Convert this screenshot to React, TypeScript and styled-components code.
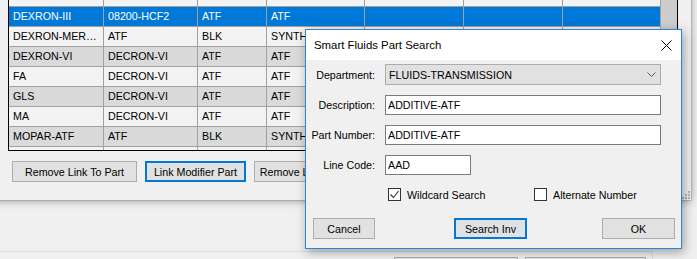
import React from "react";
import styled, { createGlobalStyle } from "styled-components";

const GlobalStyle = createGlobalStyle`
  html, body {
    margin: 0;
    padding: 0;
    background: #f0f0f0;
  }
  body {
    font-family: "Liberation Sans", Arial, sans-serif;
    font-size: 10.7px;
    color: #000000;
    overflow: hidden;
  }
  * {
    box-sizing: border-box;
  }
`;

const Desktop = styled.div`
  position: relative;
  width: 697px;
  height: 259px;
  overflow: hidden;
  background: #f0f0f0;
`;

/* main form that sits under the floating windows */
const MainForm = styled.div`
  padding-top: 251px;
  display: flex;
`;

const GroupBox = styled.div`
  margin-left: -10px;
  width: 663px;
  height: 30px;
  border-top: 1px solid #dcdcdc;
  border-right: 1px solid #dcdcdc;
  display: flex;
  justify-content: flex-end;
  gap: 7px;
  padding: 5px 6px 0 0;
`;

const Button = styled.button<{ $width: number; $focused?: boolean; $offset?: string }>`
  width: ${(p) => p.$width}px;
  height: 21px;
  flex: none;
  padding: 0;
  margin-left: ${(p) => p.$offset || "0"};
  font: inherit;
  color: #000000;
  background: #e1e1e1;
  border: ${(p) => (p.$focused ? "2px solid #0078d7" : "1px solid #adadad")};
  white-space: nowrap;
  overflow: hidden;
`;

/* window with the fluids grid */
const BackWindow = styled.div`
  position: absolute;
  left: -12px;
  top: -60px;
  width: 703px;
  height: 260px;
  background: #f0f0f0;
  box-shadow: 0 0 0 1px rgba(0, 0, 0, 0.12), 0 1px 8px rgba(0, 0, 0, 0.35);
  padding: 46px 0 0 20px;
  display: flex;
  flex-direction: column;
`;

const Grid = styled.div`
  width: 670px;
  height: 165px;
  border: 1px solid #000000;
  display: flex;
  overflow: hidden;
  background: #f0f0f0;
`;

const Rows = styled.div`
  width: 652px;
  flex: none;
  display: flex;
  flex-direction: column;
`;

type Shade = "light" | "dark" | "selected";

const rowBg: Record<Shade, string> = {
  light: "#f3f3f3",
  dark: "#dadada",
  selected: "#0078d7",
};

const Row = styled.div<{ $shade: Shade }>`
  display: flex;
  flex: none;
  height: 20px;
  border-bottom: 1px solid #a0a0a0;
  background: ${(p) => rowBg[p.$shade]};
  color: ${(p) => (p.$shade === "selected" ? "#ffffff" : "#000000")};
`;

const Cell = styled.div<{ $w: number }>`
  width: ${(p) => p.$w}px;
  flex: none;
  border-right: 1px solid #a0a0a0;
  padding-left: 4px;
  line-height: 19px;
  white-space: nowrap;
  overflow: hidden;
  text-overflow: ellipsis;
`;

const ScrollBar = styled.div`
  width: 16px;
  flex: none;
  background: #f0f0f0;
`;

const Thumb = styled.div`
  height: 120px;
  background: #cdcdcd;
`;

const ButtonBar = styled.div`
  display: flex;
  gap: 8px;
  margin-top: 10px;
  padding-left: 4px;
`;

const SizeGrip = styled.svg`
  position: absolute;
  right: 0;
  bottom: 0;
`;

/* search dialog */
const Dialog = styled.div`
  position: absolute;
  left: 305px;
  top: 29px;
  width: 377px;
  height: 220px;
  border: 1px solid #2b85d8;
  background: #f0f0f0;
  box-shadow: 2px 3px 10px rgba(0, 0, 0, 0.35);
  display: flex;
  flex-direction: column;
`;

const TitleBar = styled.div`
  height: 30px;
  flex: none;
  background: #ffffff;
  display: flex;
  align-items: center;
  padding-left: 8px;
`;

const Title = styled.div`
  flex: 1;
  font-size: 11.4px;
`;

const CloseButton = styled.div`
  width: 29px;
  height: 30px;
  display: flex;
  align-items: center;
  justify-content: center;
`;

const Body = styled.div`
  flex: 1;
  padding-top: 4px;
  display: flex;
  flex-direction: column;
`;

const FieldRow = styled.div<{ $gap: number }>`
  display: grid;
  grid-template-columns: 69px auto;
  column-gap: 10px;
  align-items: center;
  justify-content: start;
  margin-top: ${(p) => p.$gap}px;
`;

const Label = styled.label`
  text-align: right;
  white-space: nowrap;
`;

const Combo = styled.div`
  width: 276px;
  height: 21px;
  background: #e1e1e1;
  border: 1px solid #adadad;
  display: flex;
  align-items: center;
  justify-content: space-between;
  padding: 0 4px 0 3px;
`;

const TextBox = styled.input<{ $width: number }>`
  width: ${(p) => p.$width}px;
  height: 20px;
  margin: 0;
  padding: 0 2px;
  font: inherit;
  color: #000000;
  background: #ffffff;
  border: 1px solid #7a7a7a;
  border-radius: 0;
  outline: none;
`;

const CheckRow = styled.div`
  display: grid;
  grid-template-columns: 146px auto;
  margin-top: 13px;
  padding-left: 82px;
`;

const CheckItem = styled.label`
  display: flex;
  align-items: center;
  gap: 6px;
  height: 13px;
  white-space: nowrap;
`;

const Box = styled.span`
  width: 13px;
  height: 13px;
  flex: none;
  border: 1px solid #333333;
  background: #ffffff;
  display: flex;
`;

const DialogButtons = styled.div`
  display: flex;
  margin-top: 17px;
  padding: 0 6px 0 7px;
`;

type Fluid = { shade: Shade; cells: string[] };

const columns = [95, 94, 69, 98, 99, 99, 98];

const fluids: Fluid[] = [
  { shade: "light", cells: ["ATF-SPECIAL", "ATF", "BLK", "SYNTHETIC ATF"] },
  { shade: "selected", cells: ["DEXRON-III", "08200-HCF2", "ATF", "ATF"] },
  { shade: "light", cells: ["DEXRON-MERCON", "ATF", "BLK", "SYNTHETIC"] },
  { shade: "dark", cells: ["DEXRON-VI", "DECRON-VI", "ATF", "ATF"] },
  { shade: "light", cells: ["FA", "DECRON-VI", "ATF", "ATF"] },
  { shade: "dark", cells: ["GLS", "DECRON-VI", "ATF", "ATF"] },
  { shade: "light", cells: ["MA", "DECRON-VI", "ATF", "ATF"] },
  { shade: "dark", cells: ["MOPAR-ATF", "ATF", "BLK", "SYNTHETIC"] },
  { shade: "light", cells: ["MOTORCRAFT", "ATF", "BLK", "ATF"] },
];

const CheckMark = () => (
  <svg width="11" height="11" viewBox="0 0 11 11">
    <polyline points="1.5,5.5 4.5,8.5 9.5,2" fill="none" stroke="#333333" strokeWidth="1.1" />
  </svg>
);

const Checkbox: React.FC<{ checked?: boolean; label: string }> = ({ checked, label }) => (
  <CheckItem>
    <Box>{checked && <CheckMark />}</Box>
    {label}
  </CheckItem>
);

const App: React.FC = () => {
  return (
    <>
      <GlobalStyle />
      <Desktop>
        <MainForm>
          <GroupBox>
            <Button $width={124} />
            <Button $width={121} />
          </GroupBox>
        </MainForm>

        <BackWindow>
          <Grid>
            <Rows>
              {fluids.map((f, i) => (
                <Row key={i} $shade={f.shade}>
                  {columns.map((w, c) => (
                    <Cell key={c} $w={w}>
                      {f.cells[c] || ""}
                    </Cell>
                  ))}
                </Row>
              ))}
            </Rows>
            <ScrollBar>
              <Thumb />
            </ScrollBar>
          </Grid>
          <ButtonBar>
            <Button $width={125}>Remove Link To Part</Button>
            <Button $width={101} $focused>
              Link Modifier Part
            </Button>
            <Button $width={74}>Remove Link</Button>
          </ButtonBar>
          <SizeGrip width="9" height="9" viewBox="0 0 9 9">
            <g fill="#b4b4b4">
              <rect x="6" y="0" width="2" height="2" />
              <rect x="3" y="3" width="2" height="2" />
              <rect x="6" y="3" width="2" height="2" />
              <rect x="0" y="6" width="2" height="2" />
              <rect x="3" y="6" width="2" height="2" />
              <rect x="6" y="6" width="2" height="2" />
            </g>
          </SizeGrip>
        </BackWindow>

        <Dialog>
          <TitleBar>
            <Title>Smart Fluids Part Search</Title>
            <CloseButton>
              <svg width="11" height="11" viewBox="0 0 11 11">
                <path d="M0.5 0.5 L10.5 10.5 M10.5 0.5 L0.5 10.5" stroke="#000000" strokeWidth="1" />
              </svg>
            </CloseButton>
          </TitleBar>
          <Body>
            <FieldRow $gap={0}>
              <Label>Department:</Label>
              <Combo>
                <span>FLUIDS-TRANSMISSION</span>
                <svg width="9" height="5" viewBox="0 0 9 5">
                  <polyline points="0.5,0.5 4.5,4.5 8.5,0.5" fill="none" stroke="#5a5a5a" strokeWidth="1" />
                </svg>
              </Combo>
            </FieldRow>
            <FieldRow $gap={10}>
              <Label>Description:</Label>
              <TextBox $width={276} readOnly value="ADDITIVE-ATF" />
            </FieldRow>
            <FieldRow $gap={10}>
              <Label>Part Number:</Label>
              <TextBox $width={276} readOnly value="ADDITIVE-ATF" />
            </FieldRow>
            <FieldRow $gap={10}>
              <Label>Line Code:</Label>
              <TextBox $width={86} readOnly value="AAD" />
            </FieldRow>
            <CheckRow>
              <Checkbox checked label="Wildcard Search" />
              <Checkbox label="Alternate Number" />
            </CheckRow>
            <DialogButtons>
              <Button $width={62}>Cancel</Button>
              <Button $width={73} $focused $offset="79px">
                Search Inv
              </Button>
              <Button $width={73} $offset="auto">
                OK
              </Button>
            </DialogButtons>
          </Body>
        </Dialog>
      </Desktop>
    </>
  );
};

export default App;
